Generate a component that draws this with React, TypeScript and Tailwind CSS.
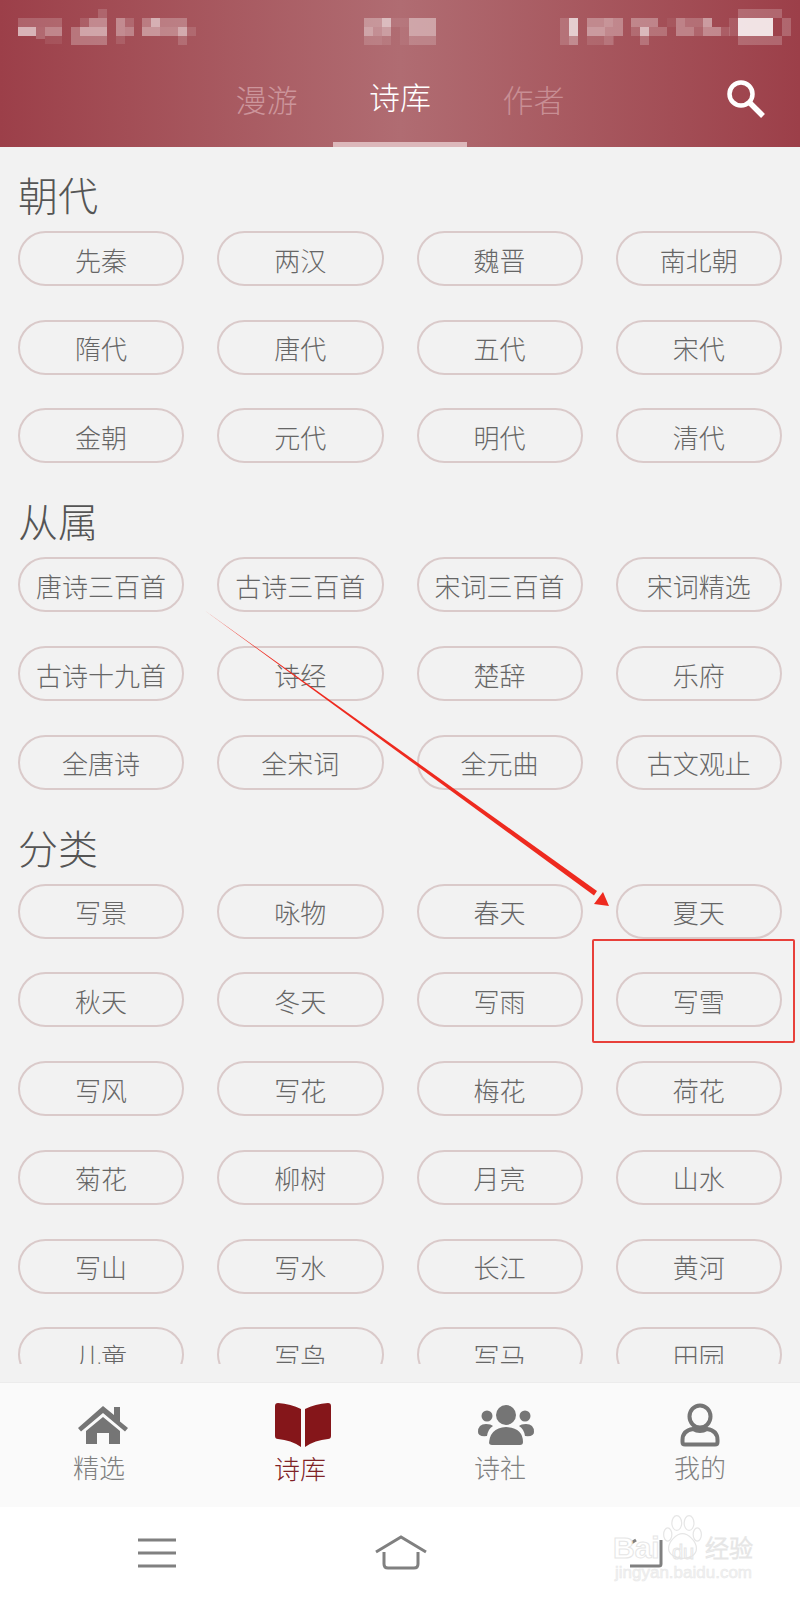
const sections = [
  {
    title: "朝代",
    items: ["先秦", "两汉", "魏晋", "南北朝", "隋代", "唐代", "五代", "宋代", "金朝", "元代", "明代", "清代"],
  },
  {
    title: "从属",
    items: ["唐诗三百首", "古诗三百首", "宋词三百首", "宋词精选", "古诗十九首", "诗经", "楚辞", "乐府", "全唐诗", "全宋词", "全元曲", "古文观止"],
  },
  {
    title: "分类",
    items: [
      "写景", "咏物", "春天", "夏天", "秋天", "冬天", "写雨", "写雪", "写风", "写花", "梅花", "荷花",
      "菊花", "柳树", "月亮", "山水", "写山", "写水", "长江", "黄河", "儿童", "写鸟", "写马", "田园",
    ],
  },
];

// blurred status bar, [x, y, w, h, opacity]
const mosaic = [
  [18, 18, 44, 9, 0.18], [18, 27, 18, 9, 0.6], [36, 27, 9, 12, 0.2], [45, 27, 17, 9, 0.35], [45, 36, 17, 8, 0.08],
  [98, 9, 9, 9, 0.15], [89, 18, 18, 9, 0.35], [80, 18, 9, 9, 0.12], [71, 27, 9, 9, 0.25], [80, 27, 27, 9, 0.5], [71, 36, 36, 9, 0.25],
  [116, 18, 9, 18, 0.35], [125, 18, 9, 9, 0.15], [125, 27, 9, 9, 0.3], [116, 36, 9, 8, 0.1],
  [142, 18, 45, 9, 0.25], [142, 27, 9, 9, 0.4], [151, 18, 9, 18, 0.4], [160, 27, 18, 9, 0.3], [178, 27, 9, 9, 0.5], [178, 36, 9, 9, 0.15], [187, 27, 9, 9, 0.12],
  [364, 18, 18, 9, 0.3], [382, 18, 9, 9, 0.55], [364, 27, 9, 9, 0.4], [373, 27, 9, 9, 0.25], [382, 27, 9, 9, 0.35], [364, 36, 18, 9, 0.15], [382, 36, 9, 9, 0.1],
  [391, 18, 18, 9, 0.08], [400, 27, 9, 18, 0.05], [409, 18, 27, 18, 0.4], [409, 36, 27, 9, 0.18],
  [560, 18, 9, 27, 0.15], [569, 18, 9, 18, 0.7], [569, 36, 9, 9, 0.3],
  [587, 18, 36, 18, 0.3], [604, 18, 9, 9, 0.1], [587, 27, 18, 9, 0.15], [587, 36, 27, 9, 0.1], [604, 36, 9, 9, 0.1],
  [631, 18, 27, 9, 0.3], [631, 27, 9, 9, 0.15], [640, 27, 9, 9, 0.6], [649, 27, 18, 9, 0.2], [640, 36, 9, 9, 0.2],
  [667, 18, 9, 9, 0.05], [676, 18, 9, 9, 0.3], [685, 18, 18, 9, 0.2], [703, 18, 9, 9, 0.45], [676, 27, 18, 9, 0.3], [694, 27, 9, 9, 0.15], [703, 27, 18, 9, 0.35], [721, 27, 9, 9, 0.12],
  [738, 18, 35, 18, 0.85], [738, 9, 44, 9, 0.2], [738, 36, 44, 9, 0.2], [729, 18, 9, 18, 0.12], [782, 18, 9, 18, 0.2],
];

const bottomTabs = [
  { label: "精选", icon: <HomeIcon />, iconPos: "ml-[6px]", labelPos: "mt-0 -ml-[2px] text-[#808080]" },
  { label: "诗库", icon: <BookIcon />, iconPos: "ml-[6px]", labelPos: "mt-[1px] text-[#7f2226]" },
  { label: "诗社", icon: <PeopleIcon />, iconPos: "ml-[11px]", labelPos: "mt-0 text-[#808080]" },
  { label: "我的", icon: <PersonIcon />, iconPos: "-ml-[1px]", labelPos: "mt-0 text-[#808080]" },
];

function HomeIcon() {
  return (
    <svg width="50" height="38" viewBox="0 0 50 38" fill="#757575">
      <path d="M25 0 36 9V1h6v14.500l8 6.500-3 3.500L25 7 3 25.500 0 22z" />
      <path d="M25 11 42 25v13H31V27H19v11H8V25z" />
    </svg>
  );
}

function BookIcon() {
  return (
    <svg width="56" height="44" viewBox="0 0 56 44" fill="#85161a">
      <path d="M0 3Q0 0 3 0 16 1 26 6V44Q16 37 3 36 0 36 0 33z" />
      <path d="M56 3Q56 0 53 0 40 1 30 6V44Q40 37 53 36 56 36 56 33z" />
    </svg>
  );
}

function PeopleIcon() {
  return (
    <svg width="56" height="40" viewBox="0 0 56 40" fill="#757575">
      <circle cx="28" cy="10" r="10" />
      <circle cx="9" cy="11" r="5.500" />
      <circle cx="47" cy="11" r="5.500" />
      <path d="M11 40Q11 23 28 22 45 23 45 37 45 40 42 40H14Q11 40 11 37z" />
      <path d="M0 27Q0 19 8 19 13 19 15 21 10 24 9 31 0 32 0 27z" />
      <path d="M56 27Q56 19 48 19 43 19 41 21 46 24 47 31 56 32 56 27z" />
    </svg>
  );
}

function PersonIcon() {
  return (
    <svg width="40" height="44" viewBox="0 0 40 44" fill="none" stroke="#757575" strokeWidth="4">
      <ellipse cx="20" cy="13.500" rx="10.500" ry="11" />
      <path d="M13 26C6 27 2.500 31 2.500 37V39Q2.500 41.500 5 41.500H35Q37.500 41.500 37.500 39V37C37.500 31 34 27 27 26Q20 30 13 26z" />
    </svg>
  );
}

function Pill({ text }: { text: string }) {
  return (
    <div className="h-[55px] pt-[1px] rounded-full border-[2.5px] border-[#dacaca] flex items-center justify-center text-[26px] text-[#666666]">
      {text}
    </div>
  );
}

export default function App() {
  return (
    <div className="relative h-[1600px] overflow-hidden bg-[#f2f2f2] flex flex-col font-['Noto_Sans_CJK_SC','Noto_Sans',sans-serif] font-light">
      {/* HEADER */}
      <header className="relative h-[147px] shrink-0 bg-linear-to-r from-[#9c3f49] via-[#b06c72] to-[#9c3f49]">
        <svg className="absolute top-0 left-0 blur-[0.7px]" width="800" height="60">
          {mosaic.map(([x, y, w, h, o], i) => (
            <rect key={i} x={x} y={y} width={w} height={h} fill="#fff" opacity={o} />
          ))}
        </svg>
        <nav className="absolute bottom-0 left-[200px] w-[400px] h-[147px] flex items-end">
          <div className="w-[133px] h-[102px] pt-[6px] flex items-center justify-center text-[31px] text-[#cc959b]">漫游</div>
          <div className="w-[134px] h-[102px] pt-[6px] flex items-center justify-center text-[31px] text-white border-b-[5px] border-[#dcb8bb]">诗库</div>
          <div className="w-[133px] h-[102px] pt-[6px] flex items-center justify-center text-[31px] text-[#c88e94]">作者</div>
        </nav>
        <svg className="absolute left-[725px] top-[78px]" width="42" height="42" viewBox="0 0 42 42" fill="none" stroke="#fff" strokeWidth="4.500">
          <circle cx="16" cy="16" r="11.500" />
          <path d="M24 24 38 38" strokeWidth="5.500" />
        </svg>
      </header>

      {/* LIST */}
      <main className="h-[1217px] shrink-0 overflow-hidden px-[18px] pt-[24px] flex flex-col gap-[34px]">
        {sections.map((s) => (
          <section key={s.title}>
            <h2 className="h-[46px] mb-[14px] flex items-center text-[40px] font-light text-[#555555]">{s.title}</h2>
            <div className="grid grid-cols-4 gap-x-[33px] gap-y-[33.7px]">
              {s.items.map((item) => (
                <Pill key={item} text={item} />
              ))}
            </div>
          </section>
        ))}
      </main>
      <div className="h-[18px] shrink-0" />

      {/* BOTTOM TABS */}
      <div className="h-[125px] shrink-0 bg-[#fafafa] border-t border-[#ececec] flex">
        {bottomTabs.map((t) => (
          <div key={t.label} className="w-1/4 pt-[19px] flex flex-col items-center">
            <div className={`h-[46px] flex items-center justify-center ${t.iconPos}`}>{t.icon}</div>
            <span className={`text-[26px] leading-[38px] ${t.labelPos}`}>{t.label}</span>
          </div>
        ))}
      </div>

      {/* SYSTEM NAV */}
      <div className="relative flex-1 bg-white">
        <svg className="absolute left-[138px] top-[31px]" width="38" height="30" viewBox="0 0 38 30" fill="#808080">
          <rect width="38" height="3" y="0.500" />
          <rect width="38" height="3" y="13.500" />
          <rect width="38" height="3" y="26.500" />
        </svg>
        <svg className="absolute left-[374px] top-[28px]" width="54" height="36" viewBox="0 0 54 36" fill="none" stroke="#808080" strokeWidth="3">
          <path d="M2 17 27 2 52 17" />
          <path d="M10 17V29Q10 33 14 33H40Q44 33 44 29V17" />
        </svg>
        <svg className="absolute left-[626px] top-[30px]" width="38" height="32" viewBox="0 0 38 32" fill="none" stroke="#808080" strokeWidth="3">
          <path d="M4 29H33Q35 29 35 27V3" />
          <path d="M2 8 10 3" />
        </svg>
        {/* watermark */}
        <div className="absolute left-[613px] top-[30px] w-[145px] h-[50px] text-white font-['Liberation_Sans',sans-serif]">
          <span className="absolute left-0 -top-[7px] text-[30px] leading-[36px] font-bold [-webkit-text-stroke:1px_#e6e6e6]">Bai</span>
          <span className="absolute left-[59px] top-[2px] text-[20px] leading-[26px] [-webkit-text-stroke:1px_#e6e6e6]">du</span>
          <span className="absolute left-[92px] -top-[5px] text-[24px] leading-[30px] font-['Noto_Sans_CJK_SC',sans-serif] [-webkit-text-stroke:1px_#e6e6e6]">经验</span>
          <span className="absolute left-[2px] top-[25px] text-[17px] leading-[22px] whitespace-nowrap text-[#f2f2f2] [-webkit-text-stroke:0.5px_#e8e8e8]">jingyan.baidu.com</span>
        </div>
        <svg className="absolute left-[662px] top-[7px]" width="41" height="46" viewBox="0 0 50 56" fill="#fff" stroke="#e6e6e6" strokeWidth="1.500">
          <ellipse cx="7" cy="25" rx="5" ry="8" />
          <ellipse cx="18" cy="11" rx="6" ry="9" />
          <ellipse cx="33" cy="11" rx="6" ry="9" />
          <ellipse cx="43" cy="25" rx="5" ry="8" />
          <path d="M8 42C8 33 18 24 25 24S42 33 42 42 32 54 25 54 8 50 8 42z" fill="none" />
        </svg>
      </div>

      {/* annotation drawn on top of the screenshot */}
      <svg className="absolute top-0 left-0 pointer-events-none" width="800" height="1600">
        <polygon points="204,610 597,891 594,895.500" fill="#ee2a1f" />
        <polygon points="609,906 594,904 603,892" fill="#ee2a1f" />
      </svg>
      <div className="absolute left-[592px] top-[939px] w-[203px] h-[104px] border-2 border-[#e8403a] rounded-[2px]" />
    </div>
  );
}
